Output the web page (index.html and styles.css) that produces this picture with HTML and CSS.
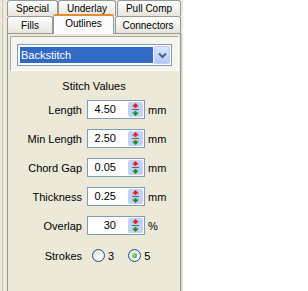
FILE: index.html
```html
<!DOCTYPE html>
<html>
    <head>
        <meta charset="utf-8" />
        <title>Outlines</title>
        <link rel="stylesheet" href="styles.css">
    </head>

    <body>
      <div id="fenetre">
        <div id="cadre">

            <div class="rangee arriere">
                <div class="onglet" id="special">Special</div>
                <div class="onglet" id="underlay">Underlay</div>
                <div class="onglet" id="pullcomp">Pull Comp</div>
            </div>
            <div class="rangee avant">
                <div class="onglet" id="fills">Fills</div>
                <div class="onglet actif" id="outlines">Outlines</div>
                <div class="onglet" id="connectors">Connectors</div>
            </div>

            <div id="page">
                <div id="zoneCombo">
                    <div class="combo">
                        <span class="choix">Backstitch</span>
                        <span class="fleche">
                            <svg width="9" height="7" viewBox="0 0 9 7"><path d="M1 1.5 L4.5 5 L8 1.5" fill="none" stroke="#4d6185" stroke-width="2"/></svg>
                        </span>
                    </div>
                </div>

                <div id="valeurs">
                    <p class="titre">Stitch Values</p>

                    <div class="grille">
                        <span class="etiquette">Length</span>
                        <div class="champ"><span class="nombre">4.50</span><span class="spin"></span></div>
                        <span class="unite">mm</span>

                        <span class="etiquette">Min Length</span>
                        <div class="champ"><span class="nombre">2.50</span><span class="spin"></span></div>
                        <span class="unite">mm</span>

                        <span class="etiquette">Chord Gap</span>
                        <div class="champ"><span class="nombre">0.05</span><span class="spin"></span></div>
                        <span class="unite">mm</span>

                        <span class="etiquette">Thickness</span>
                        <div class="champ"><span class="nombre">0.25</span><span class="spin"></span></div>
                        <span class="unite">mm</span>

                        <span class="etiquette">Overlap</span>
                        <div class="champ"><span class="nombre">30</span><span class="spin"></span></div>
                        <span class="unite">%</span>
                    </div>

                    <div class="traits">
                        <span class="etiquette">Strokes</span>
                        <span class="radio"></span><span class="chiffre">3</span>
                        <span class="radio coche"></span><span class="chiffre">5</span>
                    </div>
                </div>
            </div>

        </div>
      </div>
    </body>
</html>
```

FILE: styles.css
```css
body{
    margin: 0;
    background-color: white;
    font-family: "Liberation Sans", Arial, sans-serif;
    font-size: 11px;
    color: black;
}
#fenetre{
    width: 183px;
    height: 291px;
    padding-left: 2px;
    box-sizing: border-box;
    background-color: #ece9d8;
    overflow: hidden;
}
#cadre{
    height: 291px;
    border-left: 1px solid #c9c6b6;
    padding-left: 4px;
    box-sizing: border-box;
}

/* les onglets */
.rangee{
    display: flex;
    width: 174px;
}
.arriere{
    height: 16px;
}
.avant{
    height: 17px;
}
.onglet{
    border: 1px solid #919b9c;
    border-bottom: none;
    border-radius: 3px 3px 0 0;
    background: linear-gradient(#fffffe, #f0efea 60%, #e6e4db);
    text-align: center;
    font-size: 10px;
    padding-top: 1px;
    line-height: 14px;
    box-sizing: border-box;
}
.avant .onglet{
    line-height: 15px;
}
#special{ width: 51px; }
#underlay{ width: 58px; }
#pullcomp{ flex: 1; margin-left: 1px; }
#fills{ width: 46px; }
#outlines{ width: 61px; }
#connectors{ flex: 1; margin-left: 1px; }
.onglet.actif{
    position: relative;
    z-index: 1;
    margin-top: -2px;
    height: 20px;
    border-top: 2px solid #e68b2c;
    background: #fcfcfe;
    padding-top: 0;
    line-height: 15px;
}

/* la page */
#page{
    width: 174px;
    height: 258px;
    border: 1px solid #919b9c;
    border-bottom: none;
    box-shadow: 1px 0 0 #d6d3c6;
    box-sizing: border-box;
    padding-top: 2px;
}
#zoneCombo{
    margin: 0 1px 0 2px;
    border: 1px solid;
    border-color: #aca899 white white #aca899;
    background-color: #f5f4ef;
    padding: 7px 6px 4px 6px;
}
.combo{
    display: flex;
    height: 22px;
    border: 1px solid #7f9db9;
    background-color: white;
    box-sizing: border-box;
    padding: 2px 1px 2px 2px;
}
.choix{
    flex: 1;
    background-color: #316ac5;
    color: white;
    line-height: 16px;
    padding-left: 1px;
    margin-right: 1px;
}
.fleche{
    width: 16px;
    margin: -1px 0;
    border: 1px solid #bccdf7;
    border-radius: 2px;
    background: linear-gradient(#dbe6fd, #b5c9f6);
    display: flex;
    align-items: center;
    justify-content: center;
    box-sizing: border-box;
}

/* valeurs */
#valeurs{
    padding-top: 9px;
}
.titre{
    margin: 0 0 7px 0;
    text-align: center;
    line-height: 13px;
}
.grille{
    display: grid;
    grid-template-columns: 74px 58px auto;
    column-gap: 5px;
    row-gap: 10px;
    align-items: center;
}
.etiquette{
    text-align: right;
}
.champ{
    display: flex;
    height: 19px;
    border: 1px solid #7f9db9;
    background-color: white;
    box-sizing: border-box;
}
.nombre{
    flex: 1;
    text-align: right;
    padding-right: 11px;
    line-height: 17px;
}
.spin{
    width: 15px;
    margin: 1px;
    border-radius: 2px;
    background-color: #c3d3f8;
    background-image: url("data:image/svg+xml;utf8,<svg xmlns='http://www.w3.org/2000/svg' width='9' height='13' viewBox='0 0 9 13'><path d='M4.5 0 L8 3.5 L5.5 3.5 L5.5 5 L3.5 5 L3.5 3.5 L1 3.5 Z' fill='%23e02020'/><rect x='1' y='6' width='7' height='1' fill='%23606060'/><path d='M3.5 8 L5.5 8 L5.5 9.5 L8 9.5 L4.5 13 L1 9.5 L3.5 9.5 Z' fill='%23208a20'/></svg>");
    background-repeat: no-repeat;
    background-position: center;
}
.unite{
    margin-left: -2px;
}
.traits{
    display: flex;
    align-items: center;
    margin-top: 14px;
    height: 13px;
}
.traits .etiquette{
    width: 74px;
    margin-right: 10px;
}
.radio{
    width: 13px;
    height: 13px;
    border: 1px solid #1c5180;
    border-radius: 50%;
    box-sizing: border-box;
    background: radial-gradient(circle at 65% 65%, #fff, #dcd9cf);
    display: flex;
    align-items: center;
    justify-content: center;
}
.radio.coche::after{
    content: "";
    width: 5px;
    height: 5px;
    border-radius: 50%;
    background: radial-gradient(circle at 35% 35%, #8ee08e, #21a121);
}
.chiffre{
    margin-left: 3px;
    margin-right: 14px;
}
```
